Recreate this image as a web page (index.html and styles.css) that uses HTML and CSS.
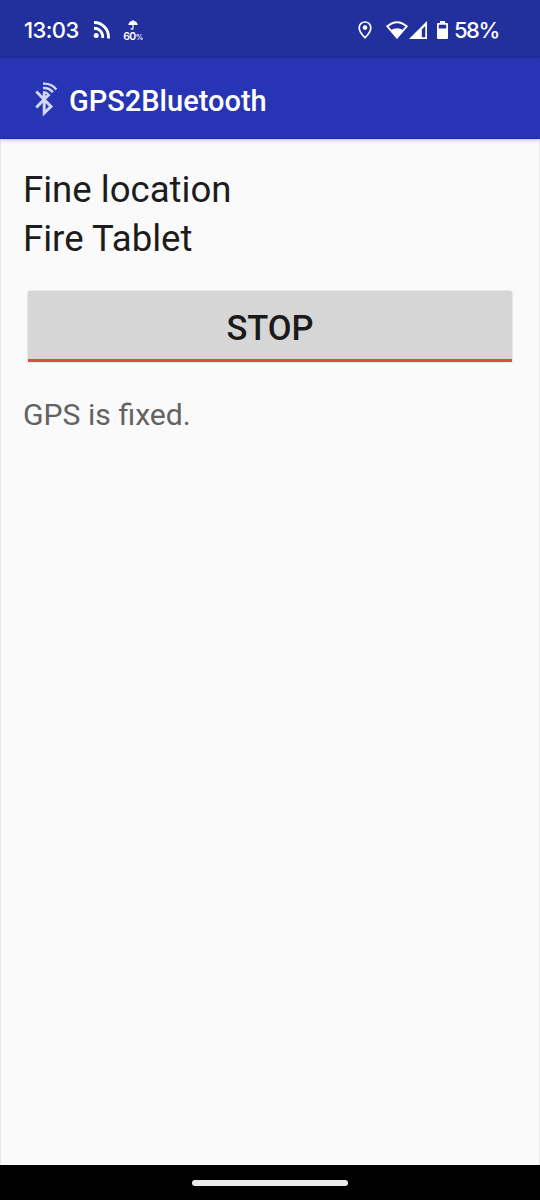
FILE: index.html
```html
<!DOCTYPE html>
<html lang="en">
<head>
<meta charset="utf-8">
<title>GPS2Bluetooth</title>
<link rel="stylesheet" href="styles.css">
</head>
<body>
<div class="screen">
  <div class="status-bar">
    <span class="clock">13:03</span>
    <svg class="feed" width="18" height="20" viewBox="0 0 18 20"><circle cx="3.2" cy="15.6" r="2.5" fill="#fff"/><path d="M1 8.200A8.600 8.600 0 0 1 9.600 18M1 2.500A14.400 14.400 0 0 1 15.400 18.500" fill="none" stroke="#fff" stroke-width="2.9"/></svg>
    <div class="rain">
      <svg width="10" height="10" viewBox="0 0 10 10"><path d="M.3 5C.6 2.400 2.300 1 4.400.9V0h1.200v.9C7.800 1 9.400 2.400 9.700 5z" fill="#fff"/><path d="M5 4v4.200a1 1 0 0 1-2 0" fill="none" stroke="#fff" stroke-width="1.200"/></svg>
      <span class="chance">60<small>%</small></span>
    </div>
    <svg class="pin" width="14" height="18" viewBox="0 0 14 18"><path d="M7 1C3.700 1 1.200 3.500 1.200 6.700 1.200 11 7 16.700 7 16.700S12.800 11 12.800 6.700C12.800 3.500 10.300 1 7 1Z" fill="none" stroke="#fff" stroke-width="1.700"/><circle cx="7" cy="6.600" r="2.300" fill="#fff"/></svg>
    <svg class="wifi" width="22" height="18" viewBox="0 0 22 18"><path d="M1.300 5.300Q11-2.900 20.700 5.300L11 16.700Z" fill="none" stroke="#fff" stroke-width="1.800"/><path d="M4.500 9.200Q11 5.500 17.500 9.200L11 17.500Z" fill="#fff"/></svg>
    <svg class="signal" width="18" height="18" viewBox="0 0 18 18"><path fill-rule="evenodd" d="M18 0V18H0ZM16.300 5L12.800 8.500V16.300H16.300Z" fill="#fff"/></svg>
    <svg class="battery" width="11" height="18" viewBox="0 0 11 18"><path fill-rule="evenodd" d="M3 0H8V2H10Q11 2 11 3V17Q11 18 10 18H1Q0 18 0 17V3Q0 2 1 2H3ZM1.800 3.800V7.500H9.200V3.800Z" fill="#fff"/></svg>
    <span class="level">58%</span>
  </div>
  <header class="app-bar">
    <svg class="logo" width="24" height="36" viewBox="0 0 24 36"><g fill="none" stroke="#d3d9f5" stroke-width="2.900"><path d="M2.300 10.500L17 25.500 10.200 32V12M2.300 26.500L14.700 13.800"/><path d="M9 11Q13 11 15.500 14.800" stroke-width="2.200"/><path d="M9 7Q15.500 6.600 18.800 11.300M9 2.600Q17.500 2.200 22.300 8.500" stroke-width="2.400"/></g></svg>
    <h1 class="title">GPS2Bluetooth</h1>
  </header>
  <main class="content">
    <p class="line">Fine location</p>
    <p class="line">Fire Tablet</p>
    <button class="toggle">STOP</button>
    <p class="message">GPS is fixed.</p>
  </main>
  <footer class="nav-bar"><div class="handle"></div></footer>
</div>
</body>
</html>
```
FILE: styles.css
```css
* { box-sizing: border-box; }
body { margin: 0; font-family: Roboto, sans-serif; }
h1, p { margin: 0; }
svg { display: block; flex: none; }
.screen { width: 540px; height: 1200px; display: flex; flex-direction: column; background: #fafafa; }
.status-bar { height: 58px; flex: none; display: flex; align-items: flex-start; padding-left: 24px; background: #21309d; color: #fff; font-family: Inter, sans-serif; font-weight: 500; }
.clock { width: 69px; margin-top: 16px; font-size: 22px; line-height: 28px; letter-spacing: -.6px; }
.feed { margin-top: 20px; }
.rain { margin: 20px 0 0 12px; width: 20px; display: flex; flex-direction: column; align-items: center; }
.chance { font-size: 10.5px; line-height: 13px; white-space: nowrap; letter-spacing: -.5px; font-weight: 600; }
.chance small { font-size: 7.5px; }
.pin { margin: 21px 0 0 215px; }
.wifi { margin: 21px 0 0 14px; }
.signal { margin: 21px 0 0 1px; }
.battery { margin: 21px 0 0 10px; }
.level { margin: 16px 0 0 6px; font-size: 22px; line-height: 28px; letter-spacing: -1.5px; }
.app-bar { position: relative; height: 81px; flex: none; display: flex; align-items: flex-start; padding-left: 34px; background: #2735b5; border-bottom: 1px solid #2029a5; box-shadow: 0 1px 4px rgba(0, 0, 0, .25); }
.logo { margin-top: 23px; }
.title { margin: 26px 0 0 11px; font-size: 29px; line-height: 34px; font-weight: 500; color: #fff; }
.content { flex: 1; display: flex; flex-direction: column; padding: 26px 28px 0; border: solid #e8e8e8; border-width: 0 1px; }
.line { margin-left: -6px; height: 49px; font-size: 36.6px; line-height: 49px; color: #1c1c1c; }
.toggle { height: 71px; margin: 28px -1px 0; padding: 6px 0 0; border: 0; border-bottom: 3px solid #df4a41; border-radius: 3px 3px 0 0; background: #d6d6d6; box-shadow: 0 0 2px rgba(0, 0, 0, .25); font: 500 34.5px/62px Roboto, sans-serif; color: #1a1a1a; }
.message { margin: 33px 0 0 -6px; font-size: 30.2px; line-height: 40px; color: #636363; }
.nav-bar { height: 35px; flex: none; display: flex; justify-content: center; background: #000; }
.handle { width: 156px; height: 6px; margin-top: 15px; border-radius: 3px; background: #ececec; }
```
